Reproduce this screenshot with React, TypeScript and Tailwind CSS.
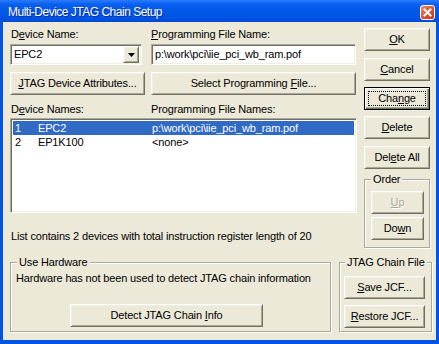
import React from "react";

const raised =
  "border border-t-white border-l-white border-r-[#716F64] border-b-[#716F64] shadow-[inset_1px_1px_0_#F1EFE2,inset_-1px_-1px_0_#ACA899]";
const sunken =
  "border border-t-[#ACA899] border-l-[#ACA899] border-r-white border-b-white shadow-[inset_1px_1px_0_#716F64,inset_-1px_-1px_0_#F1EFE2]";
const etched =
  "border border-[#ACA899] shadow-[inset_1px_1px_0_#fff,1px_1px_0_#fff] rounded-none";

function Mn({ text, at }: { text: string; at: number }) {
  if (at < 0) return <>{text}</>;
  return (
    <>
      {text.slice(0, at)}
      <span className="underline underline-offset-[1px]">{text[at]}</span>
      {text.slice(at + 1)}
    </>
  );
}

function Btn({
  label,
  at = -1,
  w,
  className = "",
  def = false,
  disabled = false,
}: {
  label: string;
  at?: number;
  w: string;
  className?: string;
  def?: boolean;
  disabled?: boolean;
}) {
  return (
    <div
      className={`relative ${w} h-[23px] flex items-center justify-center bg-[#ECE9D8] ${
        def
          ? "border border-black shadow-[inset_1px_1px_0_#fff,inset_-1px_-1px_0_#716F64,inset_-2px_-2px_0_#ACA899]"
          : raised
      } ${className}`}
    >
      <span className={disabled ? "text-[#ACA899] [text-shadow:1px_1px_0_#fff]" : ""}>
        <Mn text={label} at={at} />
      </span>
      {def && <span className="absolute inset-[3px] border border-dotted border-black" />}
    </div>
  );
}

export default function App() {
  return (
    <div className="w-[439px] h-[344px] overflow-hidden bg-[#0054E3] flex flex-col font-['Liberation_Sans',Arial,sans-serif] text-[11px] leading-[13px] tracking-[-0.15px] text-black">
      {/* title bar */}
      <div className="h-[22px] flex items-start pt-[5px] pl-[8px] pr-[4px] bg-[linear-gradient(to_bottom,#2A7BFF_0%,#0A5FF0_20%,#0058E6_50%,#0054E3_80%,#0048D8_100%)]">
        <div className="flex-1 text-white text-[12px] leading-[14px] tracking-[-0.5px] [text-shadow:1px_1px_0_#0A2A9A]">
          Multi-Device JTAG Chain Setup
        </div>
        <div className="w-[15px] h-[15px] rounded-[3px] border border-white bg-[linear-gradient(135deg,#F08A6A_0%,#E0522F_50%,#C2351A_100%)] flex items-center justify-center">
          <svg width="9" height="9" viewBox="0 0 9 9">
            <path d="M1.5 1.5 L7.5 7.5 M7.5 1.5 L1.5 7.5" stroke="#fff" strokeWidth="2" strokeLinecap="square" />
          </svg>
        </div>
      </div>

      {/* client area */}
      <div className="flex-1 mx-[3px] mb-[4px] bg-[#ECE9D8] flex flex-col">
        <div className="flex items-start pl-[7px]">
          {/* left column */}
          <div className="w-[347px] flex flex-col">
            <div className="flex pt-[6px]">
              <div className="w-[141px] pl-[1px]">
                <Mn text="Device Name:" at={1} />
              </div>
              <div>
                <Mn text="Programming File Name:" at={0} />
              </div>
            </div>
            <div className="flex mt-[3px] h-[21px]">
              <div className={`w-[132px] h-[21px] bg-white ${sunken} flex items-center pl-[2px] pr-[2px]`}>
                <span className="flex-1 pl-[1px]">EPC2</span>
                <div className={`w-[16px] h-[17px] bg-[#ECE9D8] ${raised} flex items-center justify-center`}>
                  <svg width="7" height="4" viewBox="0 0 7 4">
                    <path d="M0 0 H7 L3.5 4 Z" fill="#000" />
                  </svg>
                </div>
              </div>
              <div className={`ml-[9px] w-[205px] h-[21px] bg-white ${sunken} flex items-center pl-[3px]`}>
                p:\work\pci\iie_pci_wb_ram.pof
              </div>
            </div>
            <div className="flex mt-[7px]">
              <Btn w="w-[135px]" label="JTAG Device Attributes..." at={0} />
              <Btn w="w-[205px]" className="ml-[6px]" label="Select Programming File..." at={19} />
            </div>
            <div className="flex mt-[8px]">
              <div className="w-[141px] pl-[1px]">
                <Mn text="Device Names:" at={1} />
              </div>
              <div>Programming File Names:</div>
            </div>
            <div className={`mt-[2px] h-[95px] bg-white ${sunken} p-[2px] flex flex-col`}>
              <div className="flex h-[14px] items-center bg-[#316AC5] text-white">
                <span className="w-[25px] pl-[2px]">1</span>
                <span className="w-[114px]">EPC2</span>
                <span>p:\work\pci\iie_pci_wb_ram.pof</span>
              </div>
              <div className="flex h-[14px] items-center">
                <span className="w-[25px] pl-[2px]">2</span>
                <span className="w-[114px]">EP1K100</span>
                <span>&lt;none&gt;</span>
              </div>
            </div>
            <div className="mt-[17px] pl-[1px]">
              List contains 2 devices with total instruction register length of 20
            </div>
          </div>

          {/* right column */}
          <div className="ml-[7px] w-[66px] flex flex-col pt-[6px]">
            <Btn w="w-[66px]" label="OK" at={0} />
            <Btn w="w-[66px]" className="mt-[7px]" label="Cancel" at={0} />
            <Btn w="w-[66px]" className="mt-[6px]" label="Change" at={3} def />
            <Btn w="w-[66px]" className="mt-[6px]" label="Delete" at={0} />
            <Btn w="w-[66px]" className="mt-[7px]" label="Delete All" at={3} />
            <fieldset className={`mt-[4px] w-[66px] ${etched} pl-[6px] pb-[7px] pt-[5px]`}>
              <legend className="px-[2px] bg-[#ECE9D8]">Order</legend>
              <Btn w="w-[53px]" label="Up" at={0} disabled />
              <Btn w="w-[53px]" className="mt-[3px]" label="Down" at={2} />
            </fieldset>
          </div>
        </div>

        {/* bottom groups */}
        <div className="flex pl-[7px] mt-[8px]">
          <fieldset className={`w-[321px] h-[76px] ${etched} pl-[5px]`}>
            <legend className="ml-[1px] px-[2px] bg-[#ECE9D8]">Use Hardware</legend>
            <div className="mt-[3px]">Hardware has not been used to detect JTAG chain information</div>
            <Btn w="w-[193px]" className="mt-[19px] ml-[54px]" label="Detect JTAG Chain Info" at={18} />
          </fieldset>
          <fieldset className={`ml-[8px] w-[93px] h-[76px] ${etched} pl-[4px]`}>
            <legend className="ml-[1px] px-[2px] bg-[#ECE9D8]">JTAG Chain File</legend>
            <Btn w="w-[81px]" className="mt-[7px]" label="Save JCF..." at={0} />
            <Btn w="w-[81px]" className="mt-[6px]" label="Restore JCF..." at={0} />
          </fieldset>
        </div>
      </div>
    </div>
  );
}
